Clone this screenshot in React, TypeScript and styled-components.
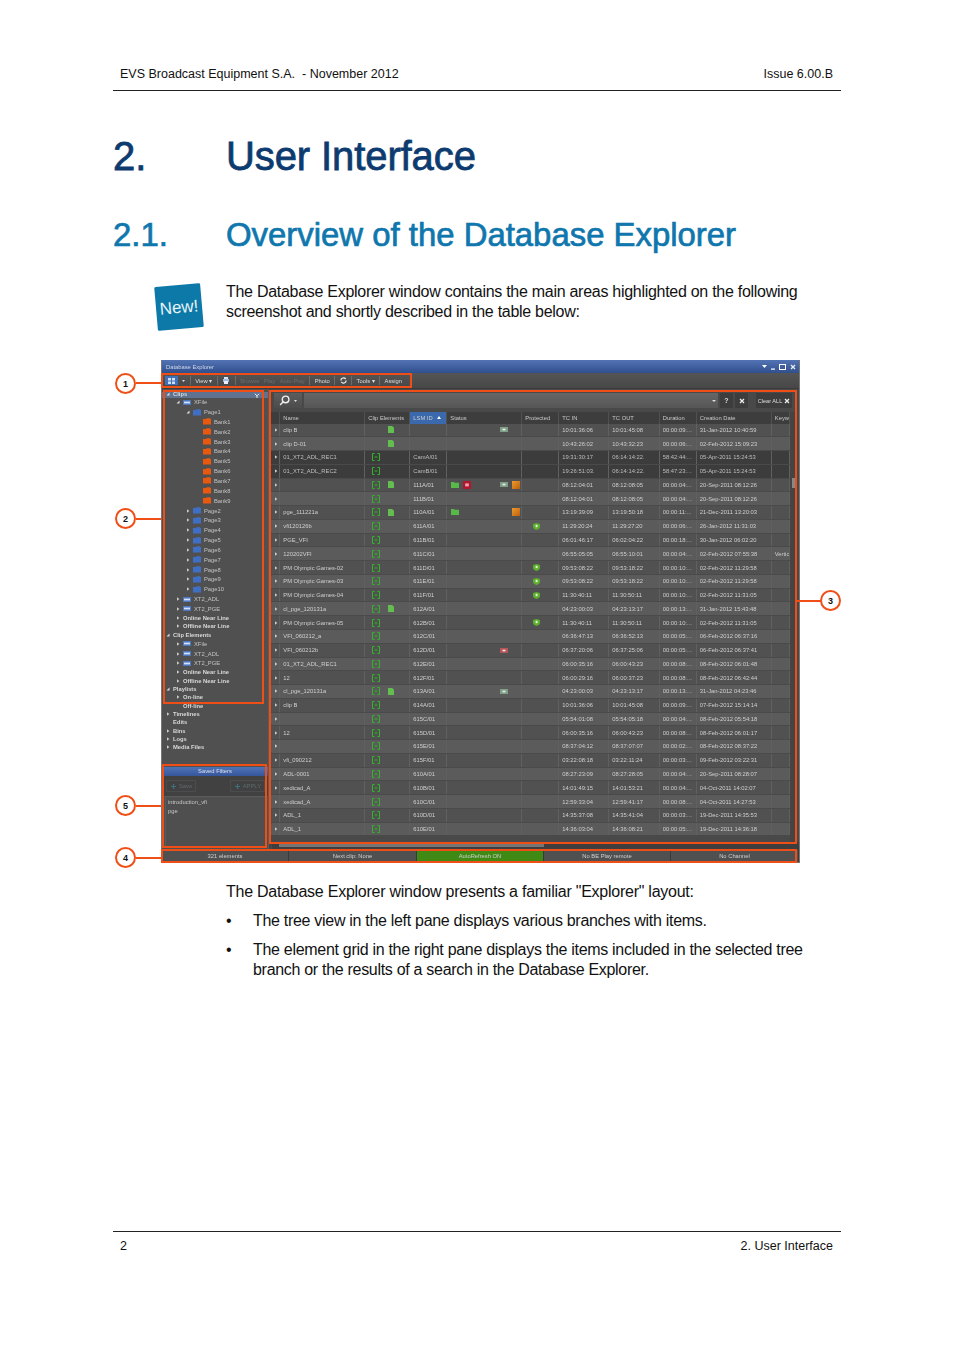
import React from "react";
import styled, { createGlobalStyle } from "styled-components";

const Global = createGlobalStyle`
  html, body { margin: 0; padding: 0; background: #fff; }
  body { font-family: "Liberation Sans", Arial, sans-serif; color: #111; }
`;
const ORANGE = "#f04e17";

const Page = styled.div`
  width: 954px; height: 1350px; box-sizing: border-box; padding: 0 113px;
  display: flex; flex-direction: column; overflow: hidden;
`;
const Header = styled.header`
  height: 91px; box-sizing: border-box; border-bottom: 1px solid #222;
  display: flex; justify-content: space-between; align-items: flex-end;
  padding: 0 8px 8.5px 7px; font-size: 12.5px; line-height: 15px; letter-spacing: 0;
`;
const H1 = styled.h1`
  margin: 40px 0 0; height: 50px; display: flex; align-items: center;
  color: #0d3b70; font-size: 40px; line-height: 50px; font-weight: 400; letter-spacing: -0.1px;
  -webkit-text-stroke: 0.8px #0d3b70;
`;
const H2 = styled.h2`
  margin: 34px 0 0; height: 40px; display: flex; align-items: center;
  color: #0f77ad; font-size: 32.9px; line-height: 40px; font-weight: 400;
  -webkit-text-stroke: 0.7px #0f77ad;
`;
const Num = styled.span`width: 113px; flex: none;`;
const Intro = styled.div`display: flex; margin-top: 27px;`;
const LogoSlot = styled.div`width: 113px; flex: none; padding: 0 0 0 40px; box-sizing: border-box;`;
const Para = styled.p`
  margin: 0; font-size: 16px; line-height: 20px; letter-spacing: -0.28px;
`;
const Figure = styled.div`position: relative; margin: 24px 0 0 48px; width: 639px; height: 503px;`;
const Win = styled.div`
  width: 639px; height: 503px; box-sizing: border-box; display: flex; flex-direction: column;
  background: #4b4b4b; border: 1px solid #777; border-top: none; filter: blur(0.4px);
  font-size: 5.8px; color: #cfcfcf; overflow: hidden;
`;
const Title = styled.div`
  height: 13px; flex: none; display: flex; align-items: center; justify-content: space-between;
  padding: 0 3px 0 4px; color: #cfd8ea;
  background: linear-gradient(#5273b4, #314f8d);
`;
const WinBtns = styled.div`display: flex; gap: 4px; align-items: center; color: #fff; font-size: 7px; font-weight: 700;`;
const Toolbar = styled.div`
  height: 15px; flex: none; display: flex; align-items: center; gap: 4.45px; padding: 0 0 0 3px;
  background: linear-gradient(#555, #474747); border-bottom: 1px solid #3b3b3b; color: #ddd;
`;
const Sep = styled.span`width: 1px; height: 9px; background: #6c6c6c;`;
const ToolBtn = styled.span<{ $off?: boolean }>`color: ${p => (p.$off ? "#6c6c6c" : "#ddd")};`;
const GridIconBtn = styled.span`
  width: 13px; height: 9px; background: #3f70b8; display: flex; align-items: center; justify-content: center;
`;
const Body = styled.div`flex: 1; min-height: 0; display: flex;`;
const Left = styled.div`width: 106px; flex: none; display: flex; flex-direction: column; background: #505050;`;
const Split = styled.div`width: 3px; flex: none; background: #434343; border-left: 1px solid #5c5c5c; box-sizing: border-box;`;
const Tree = styled.div`flex: 1; min-height: 0; position: relative; padding-top: 2.5px;`;
const TreeHead = styled.div`
  height: 6px; position: absolute; top: 3px; left: 0; right: 0; background: #5f7391;
  display: flex; align-items: center; justify-content: flex-end; padding-right: 8px;
`;
const TreeRow = styled.div<{ $ind: number; $bold?: boolean; $h: number }>`
  position: relative; height: ${p => p.$h}px; display: flex; align-items: center; gap: 3px;
  padding-left: ${p => p.$ind}px; font-weight: ${p => (p.$bold ? 700 : 400)};
  color: ${p => (p.$bold ? "#d8d8d8" : "#c4c4c4")}; white-space: nowrap;
`;
const Arrow = styled.span`width: 4px; flex: none; display: flex; align-items: center; justify-content: center;`;
const Filters = styled.div`height: 82px; flex: none; display: flex; flex-direction: column;`;
const FilterTitle = styled.div`
  height: 9px; flex: none; text-align: center; line-height: 9px; color: #d8e0ef;
  background: linear-gradient(#4f72b6, #36569b);
`;
const FilterBar = styled.div`
  height: 20px; flex: none; display: flex; justify-content: space-between; align-items: center;
  padding: 0 3px 0 4px; background: #414141;
`;
const FilterBtn = styled.span`
  height: 10px; padding: 0 3px 0 4px; display: flex; gap: 3px; align-items: center;
  color: #5f6a6a; border: 1px solid #4c4c4c;
`;
const FilterList = styled.div`
  flex: 1; margin: 0 1px 2px 3px; padding: 1px 2px; line-height: 8.5px; background: #4f4f4f;
  border: 1px solid #5b5b5b; color: #c8c8c8;
`;
const Right = styled.div`flex: 1; min-width: 0; display: flex; flex-direction: column; background: #494949;`;
const Search = styled.div`
  height: 15px; flex: none; margin: 4px 0 4px 3px; display: flex; align-items: center; gap: 2px;
`;
const SearchBtn = styled.span`
  width: 28px; height: 15px; flex: none; background: linear-gradient(#5d5d5d, #4c4c4c);
  display: flex; align-items: center; gap: 4px; padding-left: 5px; box-sizing: border-box;
`;
const SearchInput = styled.span`
  flex: 1; height: 15px; background: linear-gradient(#666, #565656);
  display: flex; align-items: center; justify-content: flex-end; padding-right: 2px;
`;
const SmallBtn = styled.span<{ $wide?: boolean }>`
  width: ${p => (p.$wide ? 36 : 13)}px; height: 15px; flex: none; background: #3d3d3d;
  display: flex; align-items: center; justify-content: center; gap: 2px; color: #ddd;
  font-size: ${p => (p.$wide ? 5.6 : 7)}px; font-weight: ${p => (p.$wide ? 400 : 700)};
  margin-left: ${p => (p.$wide ? 6 : 0)}px; margin-right: ${p => (p.$wide ? 7 : 0)}px;
`;
const GridWrap = styled.div`flex: 1; min-height: 0; display: flex;`;
const Table = styled.div`width: 519px; flex: none; display: flex; flex-direction: column;`;
const COLS = "9px 85px 45px 37px 75px 37px 50px 50.5px 37px 75px 18.5px";
const HeadRow = styled.div`
  height: 11.5px; flex: none; display: grid; grid-template-columns: ${COLS};
  background: #3d3d3d; color: #c9c9c9; overflow: hidden;
`;
const HeadCell = styled.div<{ $active?: boolean }>`
  display: flex; align-items: center; gap: 4px; padding-left: 3.3px; overflow: hidden; white-space: nowrap;
  border-right: 1px solid #515151;
  background: ${p => (p.$active ? "#3b69ad" : "transparent")};
`;
const Row = styled.div<{ $tone: number }>`
  height: 13.77px; flex: none; display: grid; grid-template-columns: ${COLS};
  background: ${p => ["#515151", "#5b5b5b", "#3c3c3c"][p.$tone]};
  border-bottom: 1px solid #4a4a4a; box-sizing: border-box;
  color: ${p => (p.$tone === 2 ? "#bdbdbd" : "#cfcfcf")};
`;
const Cell = styled.div`
  display: flex; align-items: center; padding-left: 3.3px; overflow: hidden; white-space: nowrap;
  border-right: 1px solid #606060;
`;
const ClipCell = styled.div`
  display: grid; grid-template-columns: 15px 4px 8px; align-items: center; justify-items: center;
  padding-left: 3px; border-right: 1px solid #606060;
`;
const StatusCell = styled.div`
  display: grid; grid-template-columns: 12px 12px 24px 13px 12px; align-items: center; justify-items: center;
  padding-left: 2px; border-right: 1px solid #606060;
`;
const Slot = styled.span<{ $c: number }>`grid-column: ${p => p.$c}; grid-row: 1; display: flex;`;
const ProtCell = styled.div`
  display: flex; align-items: center; justify-content: center; padding-right: 7px; border-right: 1px solid #606060;
`;
const VScroll = styled.div`
  width: 7px; flex: none; position: relative; background: #444;
`;
const Thumb = styled.span`
  position: absolute; left: 2px; top: 66px; width: 3px; height: 10px; background: #888;
`;
const HScroll = styled.div`
  height: 7px; flex: none; margin-left: 1px; background: #3e3e3e; display: flex; align-items: center; padding: 0 3px;
`;
const HThumb = styled.span`display: block; width: 265px; height: 3px; background: #767676; margin-left: 4px;`;
const Status = styled.div`
  height: 12px; flex: none; display: grid; grid-template-columns: 127px 128px 127px 127px 1fr;
  background: #505050; border-top: 1px solid #3e3e3e;
`;
const StatusItem = styled.div<{ $on?: boolean }>`
  display: flex; align-items: center; justify-content: center; color: #cfcfcf;
  border-right: 1px solid #3a3a3a; background: ${p => (p.$on ? "#3f8a15" : "transparent")};
`;
const Box = styled.div<{ $l: number; $t: number; $w: number; $h: number }>`
  position: absolute; left: ${p => p.$l}px; top: ${p => p.$t}px; width: ${p => p.$w}px; height: ${p => p.$h}px;
  box-sizing: border-box; border: 2px solid ${ORANGE}; pointer-events: none;
`;
const Callout = styled.div<{ $l: number; $t: number }>`
  position: absolute; left: ${p => p.$l}px; top: ${p => p.$t}px; width: 21px; height: 21px; box-sizing: border-box;
  border: 2px solid ${ORANGE}; border-radius: 50%; background: #fff; display: flex; align-items: center; justify-content: center;
  font-size: 9px; font-weight: 700; color: #111;
`;
const Leader = styled.div<{ $l: number; $t: number; $w: number }>`
  position: absolute; left: ${p => p.$l}px; top: ${p => p.$t}px; width: ${p => p.$w}px; height: 2px; background: ${ORANGE};
`;
const After = styled.p`margin: 19px 0 0 113px; font-size: 16px; line-height: 20px; letter-spacing: -0.25px;`;
const Bullets = styled.ul`margin: 0 0 0 113px; padding: 0; list-style: none;`;
const Bullet = styled.li`
  display: flex; margin-top: 9px; font-size: 16px; line-height: 20px; letter-spacing: -0.3px;
`;
const Dot = styled.span`width: 27px; flex: none;`;
const Spacer = styled.div`flex: 1;`;
const Footer = styled.footer`
  height: 119px; flex: none; box-sizing: border-box; border-top: 1px solid #222;
  display: flex; justify-content: space-between; padding: 7px 8px 0 7px; font-size: 12.5px; line-height: 15px;
`;

const Tri = ({ open }: { open?: boolean }) => (
  <svg width="4" height="4" viewBox="0 0 4 4">
    {open ? <path d="M0.5 3.5H3.5V0.5Z" fill="#ddd" /> : <path d="M1 0.3L3.4 2L1 3.7Z" fill="#ccc" />}
  </svg>
);
const Folder = ({ c }: { c: string }) => (
  <svg width="8" height="7" viewBox="0 0 8 7">
    <path d="M0 1H3L3.8 0.2H7.2V1H8V6.5H0Z" fill={c} />
  </svg>
);
const Chip = () => (
  <svg width="8" height="5" viewBox="0 0 8 5">
    <rect width="8" height="5" fill="#4d78c0" />
    <rect x="1" y="1.6" width="6" height="1.8" fill="#d5e2f5" />
  </svg>
);
const Bracket = () => (
  <svg width="8" height="8" viewBox="0 0 8 8" fill="none" stroke="#32b52a" strokeWidth="1">
    <path d="M2.5 .5H.5V7.5H2.5M5.5 .5H7.5V7.5H5.5M2.6 4H5.4" />
  </svg>
);
const Doc = () => (
  <svg width="6" height="7" viewBox="0 0 6 7"><path d="M0 0H4.2L6 1.8V7H0Z" fill="#63bd4f" /></svg>
);
const GreenFolder = () => (
  <svg width="8" height="6" viewBox="0 0 8 6"><path d="M0 0H3L3.6 .8H8V6H0Z" fill="#57b947" /></svg>
);
const RedTag = () => (
  <svg width="8" height="8" viewBox="0 0 8 8">
    <rect width="8" height="8" fill="#b3152f" /><rect x="2.2" y="2.4" width="3.6" height="3" fill="#e9a6b0" />
  </svg>
);
const Tag = ({ c }: { c: string }) => (
  <svg width="8" height="5" viewBox="0 0 8 5">
    <rect width="8" height="5" fill={c} /><rect x="2.5" y="1.7" width="3" height="1.6" fill="#eee" />
  </svg>
);
const OrangeBox = () => (
  <svg width="8" height="8" viewBox="0 0 8 8">
    <defs><linearGradient id="og" x1="0" y1="0" x2="1" y2="1"><stop offset="0" stopColor="#ef9a2c" /><stop offset="1" stopColor="#b8600f" /></linearGradient></defs>
    <rect width="8" height="8" fill="url(#og)" />
  </svg>
);
const Shield = () => (
  <svg width="7" height="7" viewBox="0 0 7 7">
    <path d="M3.5 0L7 1V4C7 5.6 5 6.6 3.5 7C2 6.6 0 5.6 0 4V1Z" fill="#5cae2e" />
    <rect x="2.6" y="1.8" width="2" height="2.4" fill="#dff2cc" />
  </svg>
);
const Lens = () => (
  <svg width="11" height="11" viewBox="0 0 10 10" fill="none" stroke="#eee" strokeWidth="1.3">
    <circle cx="6" cy="4" r="3" /><path d="M3.8 6.2L1 9" />
  </svg>
);
const Cross = () => (
  <svg width="6" height="6" viewBox="0 0 6 6" stroke="#eee" strokeWidth="1.3"><path d="M1 1L5 5M5 1L1 5" /></svg>
);
const Plus = () => (
  <svg width="5" height="5" viewBox="0 0 5 5" stroke="#3f6f7c" strokeWidth="1.2"><path d="M2.5 0V5M0 2.5H5" /></svg>
);

type T = { label: string; ind: number; arrow?: "o" | "c"; icon?: "chip" | "blue" | "orange"; bold?: boolean; h: number };
const pages: T[] = Array.from({ length: 9 }, (_, i) => ({ label: `Page${i + 2}`, ind: 24, arrow: "c" as const, icon: "blue" as const, h: 9.85 }));
const banks: T[] = Array.from({ length: 9 }, (_, i) => ({ label: `Bank${i + 1}`, ind: 41, icon: "orange" as const, h: 9.85 }));
const chip = (label: string, arrow: "o" | "c" = "c"): T => ({ label, ind: 14, arrow, icon: "chip", h: 9.85 });
const sub = (label: string): T => ({ label, ind: 14, arrow: "c", bold: true, h: 8.3 });
const top = (label: string, arrow?: "o" | "c"): T => ({ label, ind: arrow ? 4 : 11, arrow, bold: true, h: 8.3 });
const tree: T[] = [
  { ...top("Clips", "o"), h: 5.8 },
  chip("XFile", "o"),
  { label: "Page1", ind: 24, arrow: "o", icon: "blue", h: 9.85 },
  ...banks, ...pages,
  chip("XT2_ADL"), chip("XT2_PGE"), sub("Online Near Line"), sub("Offline Near Line"),
  top("Clip Elements", "o"),
  chip("XFile"), chip("XT2_ADL"), chip("XT2_PGE"), sub("Online Near Line"), sub("Offline Near Line"),
  top("Playlists", "o"), sub("On-line"),
  { label: "Off-line", ind: 21, bold: true, h: 8.3 },
  top("Timelines", "c"), top("Edits"), top("Bins", "c"), top("Logs", "c"), top("Media Files", "c"),
];

type R = [string, boolean, string, string, string, string, string, string?];
// name, doc, lsm, status flags, tcin, tcout, dur|date, keyword
const rows: R[] = [
  ["clip B", true, "", "t", "10:01:36:06", "10:01:45:08", "00:00:09:...|31-Jan-2012 10:40:59"],
  ["clip D-01", true, "", "", "10:43:26:02", "10:43:32:23", "00:00:06:...|02-Feb-2012 15:09:23"],
  ["01_XT2_ADL_REC1", false, "CamA/01", "", "19:31:30:17", "06:14:14:22.", "58:42:44:...|05-Apr-2011 15:24:53"],
  ["01_XT2_ADL_REC2", false, "CamB/01", "", "19:26:51:03.", "06:14:14:22.", "58:47:23:...|05-Apr-2011 15:24:53"],
  ["", true, "111A/01", "frto", "08:12:04:01", "08:12:08:05", "00:00:04:...|20-Sep-2011 08:12:26"],
  ["", false, "111B/01", "", "08:12:04:01", "08:12:08:05", "00:00:04:...|20-Sep-2011 08:12:26"],
  ["pge_111221a", true, "110A/01", "fo", "13:19:39:09", "13:19:50:18", "00:00:11:...|21-Dec-2011 13:20:03"],
  ["vfi120126b", false, "611A/01", "s", "11:29:20:24", "11:29:27:20", "00:00:06:...|26-Jan-2012 11:31:03"],
  ["PGE_VFI", false, "611B/01", "", "06:01:46:17", "06:02:04:22", "00:00:18:...|30-Jan-2012 06:02:20"],
  ["120202VFI", false, "611C/01", "", "06:55:05:05", "06:55:10:01", "00:00:04:...|02-Feb-2012 07:55:38", "Vertic"],
  ["PM Olympic Games-02", false, "611D/01", "s", "09:53:08:22", "09:53:18:22", "00:00:10:...|02-Feb-2012 11:29:58"],
  ["PM Olympic Games-03", false, "611E/01", "s", "09:53:08:22", "09:53:18:22", "00:00:10:...|02-Feb-2012 11:29:58"],
  ["PM Olympic Games-04", false, "611F/01", "s", "11:30:40:11", "11:30:50:11", "00:00:10:...|02-Feb-2012 11:31:05"],
  ["cl_pge_120131a", true, "612A/01", "", "04:23:00:03", "04:23:13:17", "00:00:13:...|31-Jan-2012 15:43:48"],
  ["PM Olympic Games-05", false, "612B/01", "s", "11:30:40:11", "11:30:50:11", "00:00:10:...|02-Feb-2012 11:31:05"],
  ["VFI_060212_a", false, "612C/01", "", "06:36:47:13", "06:36:52:13", "00:00:05:...|06-Feb-2012 06:37:16"],
  ["VFI_060212b", false, "612D/01", "r", "06:37:20:06", "06:37:25:06", "00:00:05:...|06-Feb-2012 06:37:41"],
  ["01_XT2_ADL_REC1", false, "612E/01", "", "06:00:35:16", "06:00:43:23", "00:00:08:...|08-Feb-2012 06:01:48"],
  ["12", false, "612F/01", "", "06:00:29:16", "06:00:37:23", "00:00:08:...|08-Feb-2012 06:42:44"],
  ["cl_pge_120131a", true, "613A/01", "t", "04:23:00:03", "04:23:13:17", "00:00:13:...|31-Jan-2012 04:23:46"],
  ["clip B", false, "614A/01", "", "10:01:36:06", "10:01:45:08", "00:00:09:...|07-Feb-2012 15:14:14"],
  ["", false, "615C/01", "", "05:54:01:08", "05:54:05:18", "00:00:04:...|08-Feb-2012 05:54:18"],
  ["12", false, "615D/01", "", "06:00:35:16", "06:00:43:23", "00:00:08:...|08-Feb-2012 06:01:17"],
  ["", false, "615E/01", "", "08:37:04:12", "08:37:07:07", "00:00:02:...|08-Feb-2012 08:37:22"],
  ["vfi_090212", false, "615F/01", "", "03:22:08:18", "03:22:11:24", "00:00:03:...|09-Feb-2012 03:22:31"],
  ["ADL-0001", false, "610A/01", "", "08:27:23:09", "08:27:28:05", "00:00:04:...|20-Sep-2011 08:28:07"],
  ["xedicad_A", false, "610B/01", "", "14:01:49:15", "14:01:53:21", "00:00:04:...|04-Oct-2011 14:02:07"],
  ["xedicad_A", false, "610C/01", "", "12:59:33:04", "12:59:41:17", "00:00:08:...|04-Oct-2011 14:27:53"],
  ["ADL_1", false, "610D/01", "", "14:35:37:08", "14:35:41:04", "00:00:03:...|19-Dec-2011 14:35:53"],
  ["ADL_1", false, "610E/01", "", "14:36:03:04", "14:36:08:21", "00:00:05:...|19-Dec-2011 14:36:18"],
];
const heads = ["", "Name", "Clip Elements", "LSM ID", "Status", "Protected", "TC IN", "TC OUT", "Duration", "Creation Date", "Keyw"];

function TreeIcon({ icon }: { icon?: T["icon"] }) {
  if (icon === "chip") return <Chip />;
  if (icon === "blue") return <Folder c="#3f6fc4" />;
  if (icon === "orange") return <Folder c="#e8590f" />;
  return null;
}

function StatusIcons({ flags }: { flags: string }) {
  return (
    <StatusCell>
      {flags.includes("f") && <Slot $c={1}><GreenFolder /></Slot>}
      {flags.includes("r") && !flags.includes("f") && <Slot $c={4}><Tag c="#b5555a" /></Slot>}
      {flags.includes("r") && flags.includes("f") && <Slot $c={2}><RedTag /></Slot>}
      {flags.includes("t") && <Slot $c={4}><Tag c="#7f9f86" /></Slot>}
      {flags.includes("o") && <Slot $c={5}><OrangeBox /></Slot>}
    </StatusCell>
  );
}

export default function App() {
  return (
    <Page>
      <Global />
      <Header>
        <span>EVS Broadcast Equipment S.A.&nbsp; - November 2012</span>
        <span>Issue 6.00.B</span>
      </Header>
      <H1><Num>2.</Num><span>User Interface</span></H1>
      <H2><Num>2.1.</Num><span>Overview of the Database Explorer</span></H2>
      <Intro>
        <LogoSlot>
          <svg width="52" height="50" viewBox="0 0 52 50">
            <g transform="rotate(-5 26 25)">
              <rect x="3" y="3" width="46" height="44" rx="1.5" fill="#0c79a8" />
              <text x="26" y="31" textAnchor="middle" fontFamily="Liberation Sans, sans-serif" fontSize="17" fill="#e9f4f8">New!</text>
            </g>
          </svg>
        </LogoSlot>
        <Para>
          The Database Explorer window contains the main areas highlighted on the following<br />
          screenshot and shortly described in the table below:
        </Para>
      </Intro>
      <Figure>
        <Win>
          <Title>
            <span>Database Explorer</span>
            <WinBtns>
              <svg width="5" height="3" viewBox="0 0 5 3"><path d="M0 0H5L2.5 3Z" fill="#fff" /></svg>
              <svg width="4" height="6" viewBox="0 0 4 6"><rect y="4.5" width="4" height="1.2" fill="#fff" /></svg>
              <svg width="7" height="6" viewBox="0 0 7 6" fill="none" stroke="#fff"><rect x=".5" y=".5" width="6" height="5" /></svg>
              <Cross />
            </WinBtns>
          </Title>
          <Toolbar>
            <GridIconBtn>
              <svg width="7" height="6" viewBox="0 0 7 6" fill="#cfe0f5"><rect width="3" height="2.5" /><rect x="4" width="3" height="2.5" /><rect y="3.5" width="3" height="2.5" /><rect x="4" y="3.5" width="3" height="2.5" /></svg>
            </GridIconBtn>
            <svg width="3" height="2" viewBox="0 0 3 2"><path d="M0 0H3L1.5 2Z" fill="#ddd" /></svg>
            <Sep />
            <ToolBtn>View ▾</ToolBtn>
            <Sep />
            <svg width="8" height="7" viewBox="0 0 8 7"><rect x="1" y="2" width="6" height="3" fill="#9fbbe0" /><rect x="2" width="4" height="2" fill="#d6e4f5" /><rect x="2" y="4" width="4" height="3" fill="#eef" /></svg>
            <Sep />
            <ToolBtn $off>Browse</ToolBtn>
            <ToolBtn $off>Play</ToolBtn>
            <ToolBtn $off>Auto-Play</ToolBtn>
            <Sep />
            <ToolBtn>Photo</ToolBtn>
            <Sep />
            <svg width="7" height="7" viewBox="0 0 8 8" fill="none" stroke="#eee" strokeWidth="1.4"><path d="M1 4A3 3 0 0 1 6.5 2.4M7 4A3 3 0 0 1 1.5 5.6" /></svg>
            <Sep />
            <ToolBtn>Tools ▾</ToolBtn>
            <Sep />
            <ToolBtn>Assign</ToolBtn>
          </Toolbar>
          <Body>
            <Left>
              <Tree>
                <TreeHead>
                  <svg width="6" height="5" viewBox="0 0 8 7" fill="none" stroke="#eee" strokeWidth="1.4"><path d="M1 1L4 4L7 1M4 4V7" /></svg>
                </TreeHead>
                {tree.map((t, i) => (
                  <TreeRow key={i} $ind={t.ind} $bold={t.bold} $h={t.h}>
                    {t.arrow && <Arrow><Tri open={t.arrow === "o"} /></Arrow>}
                    <TreeIcon icon={t.icon} />
                    <span>{t.label}</span>
                  </TreeRow>
                ))}
              </Tree>
              <Filters>
                <FilterTitle>Saved Filters</FilterTitle>
                <FilterBar>
                  <FilterBtn><Plus />Save</FilterBtn>
                  <FilterBtn><Plus />APPLY</FilterBtn>
                </FilterBar>
                <FilterList>introduction_vfi<br />pge</FilterList>
              </Filters>
            </Left>
            <Split />
            <Right>
              <Search>
                <SearchBtn>
                  <Lens />
                  <svg width="3" height="2" viewBox="0 0 3 2"><path d="M0 0H3L1.5 2Z" fill="#ddd" /></svg>
                </SearchBtn>
                <SearchInput>
                  <svg width="4" height="2" viewBox="0 0 4 2"><path d="M0 0H4L2 2Z" fill="#ddd" /></svg>
                </SearchInput>
                <SmallBtn>?</SmallBtn>
                <SmallBtn><Cross /></SmallBtn>
                <SmallBtn $wide>Clear ALL <Cross /></SmallBtn>
              </Search>
              <GridWrap>
                <Table>
                  <HeadRow>
                    {heads.map((h, i) => (
                      <HeadCell key={i} $active={h === "LSM ID"}>
                        {h}{h === "LSM ID" && <svg width="4" height="3" viewBox="0 0 4 3"><path d="M0 3H4L2 0Z" fill="#fff" /></svg>}
                      </HeadCell>
                    ))}
                  </HeadRow>
                  {rows.map((r, i) => {
                    const [dur, date] = r[6].split("|");
                    const tone = i === 2 || i === 3 ? 2 : i % 2 === 0 ? 0 : 1;
                    return (
                      <Row key={i} $tone={tone}>
                        <Cell><Tri /></Cell>
                        <Cell>{r[0]}</Cell>
                        <ClipCell>
                          {i > 1 ? <Slot $c={1}><Bracket /></Slot> : null}
                          {r[1] ? <Slot $c={3}><Doc /></Slot> : null}
                        </ClipCell>
                        <Cell>{r[2]}</Cell>
                        <StatusIcons flags={r[3]} />
                        <ProtCell>{r[3].includes("s") && <Shield />}</ProtCell>
                        <Cell>{r[4]}</Cell>
                        <Cell>{r[5]}</Cell>
                        <Cell>{dur}</Cell>
                        <Cell>{date}</Cell>
                        <Cell>{r[7]}</Cell>
                      </Row>
                    );
                  })}
                </Table>
                <VScroll><Thumb /></VScroll>
              </GridWrap>
              <HScroll><HThumb /></HScroll>
            </Right>
          </Body>
          <Status>
            <StatusItem>321 elements</StatusItem>
            <StatusItem>Next clip: None</StatusItem>
            <StatusItem $on>AutoRefresh ON</StatusItem>
            <StatusItem>No BE Play remote</StatusItem>
            <StatusItem>No Channel</StatusItem>
          </Status>
        </Win>
        <Box $l={0} $t={13} $w={251} $h={15} />
        <Box $l={2} $t={30} $w={101} $h={314} />
        <Box $l={108} $t={30} $w={528} $h={454} />
        <Box $l={0} $t={489} $w={636} $h={14} />
        <Box $l={1} $t={404} $w={105} $h={84} />
        <Leader $l={-25} $t={22} $w={25} />
        <Leader $l={-25} $t={158} $w={25} />
        <Leader $l={-25} $t={445} $w={25} />
        <Leader $l={-25} $t={497} $w={25} />
        <Leader $l={636} $t={240} $w={24} />
        <Callout $l={-46} $t={13}>1</Callout>
        <Callout $l={-46} $t={148}>2</Callout>
        <Callout $l={659} $t={230}>3</Callout>
        <Callout $l={-46} $t={487}>4</Callout>
        <Callout $l={-46} $t={435}>5</Callout>
      </Figure>
      <After>The Database Explorer window presents a familiar "Explorer" layout:</After>
      <Bullets>
        <Bullet><Dot>•</Dot><span>The tree view in the left pane displays various branches with items.</span></Bullet>
        <Bullet><Dot>•</Dot><span>The element grid in the right pane displays the items included in the selected tree<br />branch or the results of a search in the Database Explorer.</span></Bullet>
      </Bullets>
      <Spacer />
      <Footer>
        <span>2</span>
        <span>2. User Interface</span>
      </Footer>
    </Page>
  );
}
